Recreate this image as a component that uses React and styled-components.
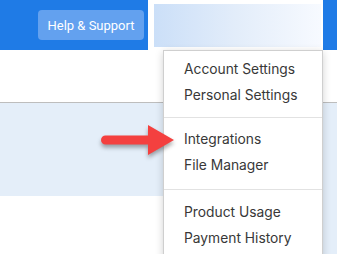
import React from "react";
import styled, { createGlobalStyle } from "styled-components";

const Global = createGlobalStyle`
  html, body { margin: 0; padding: 0; }
  body { width: 337px; height: 254px; overflow: hidden; background: #fff; font-family: Inter, "Noto Sans", sans-serif; }
`;

const Page = styled.div`
  position: relative;
  width: 337px;
  height: 254px;
  overflow: hidden;
`;

const Header = styled.header`
  display: flex;
  align-items: stretch;
  height: 50px;
  background: #1f7be6;
  padding-left: 38px;
`;

const HelpWrap = styled.div`
  display: flex;
  align-items: center;
  width: 110px;
`;

const HelpButton = styled.button`
  height: 30px;
  width: 106px;
  border: none;
  border-radius: 4px;
  background: #63a1ef;
  color: #fff;
  font-family: Roboto, "Noto Sans", sans-serif;
  font-size: 13px;
  padding: 0;
`;

const UserPanel = styled.div`
  width: 175px;
  background: #fff;
  padding: 4px 2px 3px 6px;
  box-sizing: border-box;
  display: flex;
`;

const UserGradient = styled.div`
  flex: 1;
  background: linear-gradient(90deg, #cbdff8 0%, #e3edfa 50%, #f7faff 100%);
`;

const Body = styled.div`
  display: flex;
  height: 204px;
`;

const Main = styled.div`
  flex: 1;
  display: flex;
  flex-direction: column;
`;

const Side = styled.div`
  width: 14px;
  display: flex;
  flex-direction: column;
`;

const Blank = styled.div`
  height: ${(p) => p.$h}px;
  background: #fff;
  border-bottom: ${(p) => (p.$line ? "1px solid #bdbdbd" : "none")};
`;

const Band = styled.div`
  height: ${(p) => (p.$h ? `${p.$h}px` : "auto")};
  flex: ${(p) => (p.$h ? "none" : "1")};
  background: #e4eef9;
`;

const Rest = styled.div`
  flex: 1;
  background: #fff;
`;

const Dropdown = styled.div`
  position: absolute;
  left: 163px;
  top: 50px;
  width: 160px;
  height: 230px;
  box-sizing: border-box;
  background: #fff;
  border: 1px solid #cfcfcf;
  box-shadow: 0 2px 8px rgba(0, 0, 0, 0.18);
`;

const Group = styled.div`
  padding: ${(p) => p.$pt}px 0 ${(p) => p.$pb}px;
  border-bottom: ${(p) => (p.$last ? "none" : "1px solid #e2e2e2")};
`;

const Item = styled.div`
  height: 26px;
  line-height: 26px;
  padding-left: 20px;
  font-size: 13.8px;
  color: #383838;
  white-space: nowrap;
`;

const Arrow = styled.svg`
  position: absolute;
  left: 96px;
  top: 120px;
  overflow: visible;
  filter: drop-shadow(0 3px 2px rgba(0, 0, 0, 0.35));
`;

export default function App() {
  return (
    <Page>
      <Global />
      <Header>
        <HelpWrap>
          <HelpButton>Help &amp; Support</HelpButton>
        </HelpWrap>
        <UserPanel>
          <UserGradient />
        </UserPanel>
      </Header>
      <Body>
        <Main>
          <Blank $h={52} $line />
          <Band $h={93} />
          <Rest />
        </Main>
        <Side>
          <Blank $h={52} $line />
          <Band />
        </Side>
      </Body>
      <Dropdown>
        <Group $pt={5} $pb={9}>
          <Item>Account Settings</Item>
          <Item>Personal Settings</Item>
        </Group>
        <Group $pt={8} $pb={11}>
          <Item>Integrations</Item>
          <Item>File Manager</Item>
        </Group>
        <Group $pt={9} $pb={0} $last>
          <Item>Product Usage</Item>
          <Item>Payment History</Item>
        </Group>
      </Dropdown>
      <Arrow width="80" height="40" viewBox="0 0 80 40">
        <path
          d="M9.5 15.5 H52 V5 L78 20 L52 35 V24.5 H9.5 A4.5 4.5 0 0 1 9.5 15.5 Z"
          fill="#f4403f"
        />
      </Arrow>
    </Page>
  );
}
